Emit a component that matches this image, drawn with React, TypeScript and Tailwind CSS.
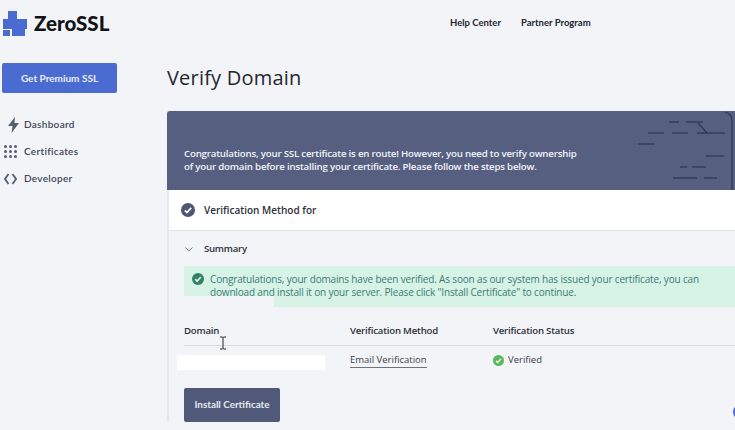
import React from "react";

const sans = "font-['Open_Sans',sans-serif]";
const ui = "font-['Lato','Inter',sans-serif]";

function Logo() {
  return (
    <svg width="24" height="25" viewBox="0 0 24 25" className="shrink-0">
      <path fill="#4a6bd0" d="M5 0h9v8h10v10h-2v7H9v-7H0V8h5z" />
      <rect x="0" y="19" width="7" height="6" fill="#4a6bd0" />
    </svg>
  );
}

function CheckCircle({ size, bg }: { size: number; bg: string }) {
  return (
    <svg width={size} height={size} viewBox="0 0 20 20" className="shrink-0">
      <circle cx="10" cy="10" r="10" fill={bg} />
      <path d="M5.5 10.5l3 3 6-6.5" fill="none" stroke="#fff" strokeWidth="2.4" />
    </svg>
  );
}

function Bolt() {
  return (
    <svg width="14" height="16" viewBox="0 0 14 16" className="shrink-0 ml-[3px]">
      <path fill="#555d72" d="M8 0L1 9h4.500l-1 7L12 6H7.500z" />
    </svg>
  );
}

function Grid() {
  const dots = [0, 1, 2, 3, 4, 5, 6, 7, 8];
  return (
    <div className="grid grid-cols-3 gap-[2px] w-[13px] shrink-0">
      {dots.map((d) => (
        <span key={d} className="w-[3px] h-[3px] bg-[#555d72] rounded-full" />
      ))}
    </div>
  );
}

function Code() {
  return (
    <svg width="13" height="12" viewBox="0 0 13 12" className="shrink-0">
      <path d="M4.5 1L1 6l3.500 5M8.500 1L12 6l-3.500 5" fill="none" stroke="#555d72" strokeWidth="1.800" />
    </svg>
  );
}

function Decoration() {
  const lines = [
    [502, 11, 512, 11],
    [519, 11, 536, 11],
    [531, 12, 540, 22],
    [481, 22, 497, 22],
    [505, 22, 521, 22],
    [530, 22, 558, 22],
    [471, 33, 488, 33],
    [539, 45, 557, 45],
    [513, 56, 520, 56],
    [525, 56, 539, 56],
    [506, 67, 530, 67],
    [537, 67, 550, 67],
  ];
  return (
    <svg viewBox="0 0 568 79" className="absolute left-0 top-0 w-[568px] h-[79px]">
      {lines.map((l, i) => (
        <line key={i} x1={l[0]} y1={l[1]} x2={l[2]} y2={l[3]} stroke="#2c3550" strokeWidth="1.200" />
      ))}
      <path d="M558 1c4 1 7 4 7 9v69" fill="none" stroke="#2c3550" strokeWidth="1.200" />
    </svg>
  );
}

function NavItem({ icon, label }: { icon: React.ReactNode; label: string }) {
  return (
    <div className="h-[27px] flex items-center">
      <div className="w-[24px] pl-[4px] flex items-center">{icon}</div>
      <span className="text-[10px] font-semibold tracking-[0.3px] text-[#3f4659]">{label}</span>
    </div>
  );
}

export default function App() {
  return (
    <div className={`w-[735px] h-[430px] overflow-hidden bg-[#f3f4f7] flex flex-col ${sans}`}>
      <header className={`h-[46px] flex items-center shrink-0 ${ui}`}>
        <div className="w-[450px] pl-[3px] flex items-center gap-[7px]">
          <Logo />
          <span className="text-[20.500px] leading-none font-black text-[#111318]">ZeroSSL</span>
        </div>
        <div className="flex gap-[20px] text-[9.500px] font-bold text-[#23262f]">
          <span>Help Center</span>
          <span>Partner Program</span>
        </div>
      </header>

      <div className="flex flex-1 min-h-0">
        <aside className={`w-[167px] shrink-0 pt-[17px] ${ui}`}>
          <div className="ml-[2px] w-[115px] h-[30px] rounded-[2px] bg-[#4a6bd0] flex items-center justify-center text-[10px] font-bold text-[#e8ecf8]">
            Get Premium SSL
          </div>
          <nav className="mt-[18px]">
            <NavItem icon={<Bolt />} label="Dashboard" />
            <NavItem icon={<Grid />} label="Certificates" />
            <NavItem icon={<Code />} label="Developer" />
          </nav>
        </aside>

        <main className="flex-1 min-w-0">
          <h1 className="h-[65px] pt-[18px] text-[20px] leading-[28px] font-medium tracking-[0.2px] text-[#23262f]">
            Verify Domain
          </h1>

          <section className="border-l-2 border-[#e8e9ec]">
            <div className="relative h-[79px] -ml-[2px] bg-[#565f80] rounded-tl-[3px] pl-[17px] pt-[36px]">
              <Decoration />
              <p className="relative text-[9.700px] tracking-[-0.2px] leading-[13px] font-semibold text-[#f1f3f8]">
                Congratulations, your SSL certificate is en route! However, you need to verify ownership
                <br />
                of your domain before installing your certificate. Please follow the steps below.
              </p>
            </div>

            <div className="h-[41px] bg-white border-b border-[#e2e3e7] flex items-center pl-[12px]">
              <CheckCircle size={14} bg="#4e5675" />
              <span className="ml-[9px] text-[10px] font-semibold text-[#2d3038]">Verification Method for</span>
            </div>

            <div className="pl-[15px]">
              <div className="h-[35px] flex items-center pt-[1px]">
                <svg width="8" height="5" viewBox="0 0 8 5" className="ml-[1px]">
                  <path d="M.5.500L4 4 7.500.500" fill="none" stroke="#6c7280" strokeWidth="0.900" />
                </svg>
                <span className="ml-[11px] text-[9.600px] tracking-[-0.25px] font-semibold text-[#2d3038]">Summary</span>
              </div>

              <div className="relative h-[41px] bg-[#d6f3e6] flex items-start pl-[8px] pt-[7px]">
                <div className="absolute left-0 top-[30px] w-[90px] h-[11px] bg-[#f3f4f7]" />
                <CheckCircle size={12} bg="#2f8468" />
                <p className="relative ml-[6px] text-[10px] tracking-[-0.165px] leading-[13.400px] font-medium text-[#3d7d74] whitespace-nowrap">
                  Congratulations, your domains have been verified. As soon as our system has issued your certificate, you can
                  <br />
                  download and install it on your server. Please click "Install Certificate" to continue.
                </p>
              </div>

              <div className="mt-[16px] h-[23px] pt-[1px] border-b border-[#d9dade] flex text-[9.600px] tracking-[-0.2px] font-semibold text-[#2d3038]">
                <span className="w-[166px]">Domain</span>
                <span className="w-[143px]">Verification Method</span>
                <span>Verification Status</span>
              </div>

              <div className="h-[29px] flex items-center text-[9.500px] text-[#3c404a]">
                <div className="w-[166px] relative h-full">
                  <div className="absolute -left-[7px] top-[9px] w-[148px] h-[15px] bg-white" />
                </div>
                <span className="w-[143px]">
                  <span className="border-b border-[#6c7280] pb-[1px]">Email Verification</span>
                </span>
                <span className="flex items-center gap-[4px]">
                  <CheckCircle size={11} bg="#58b85a" />
                  Verified
                </span>
              </div>

              <button className={`mt-[13px] w-[96px] h-[34px] pb-[1px] rounded-[2px] bg-[#505a78] text-[9.900px] font-bold text-[#e6e9f1] ${ui}`}>
                Install Certificate
              </button>
            </div>
          </section>
        </main>
      </div>

      <svg width="12" height="12" viewBox="0 0 12 12" className="absolute left-[733px] top-[406px]">
        <circle cx="8" cy="6" r="8" fill="#4a6bd0" />
      </svg>
      <svg width="10" height="14" viewBox="0 0 10 14" className="absolute left-[218px] top-[336px]">
        <path d="M2 1h2.500l.500.500.500-.500H8M5 1.500v11M2 13h2.500l.500-.500.500.500H8" fill="none" stroke="#23262f" strokeWidth="1" />
      </svg>
    </div>
  );
}
